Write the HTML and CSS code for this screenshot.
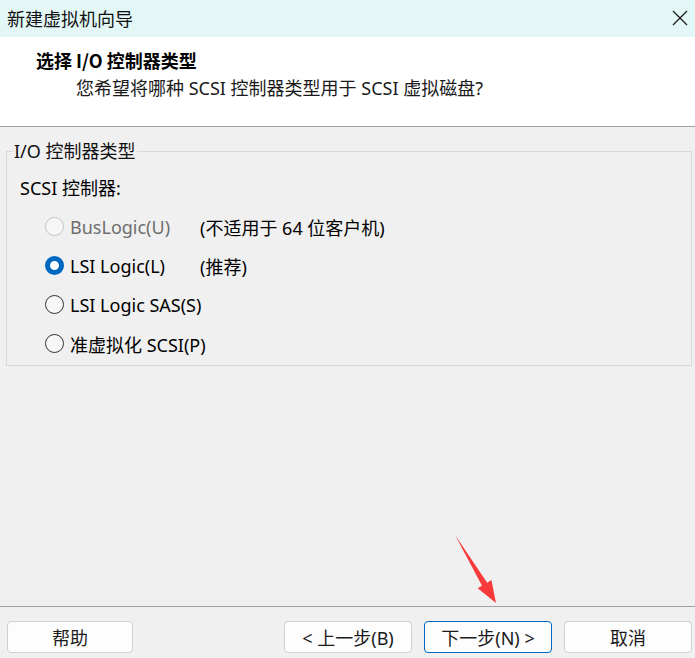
FILE: index.html
```html
<!DOCTYPE html>
<html lang="zh-CN">
<head>
<meta charset="utf-8">
<title>新建虚拟机向导</title>
<link rel="stylesheet" href="styles.css">
</head>
<body>
<div class="window">
  <div class="titlebar">
    <span class="title">新建虚拟机向导</span>
    <svg class="close" width="16" height="16" viewBox="0 0 16 16"><path d="M1 1 L15 15 M15 1 L1 15" stroke="#1a1a1a" stroke-width="1.3" fill="none"/></svg>
  </div>
  <div class="header">
    <div class="h-title">选择 I/O 控制器类型</div>
    <div class="h-sub">您希望将哪种 SCSI 控制器类型用于 SCSI 虚拟磁盘?</div>
  </div>
  <div class="content">
    <fieldset class="group">
      <legend class="legend">I/O 控制器类型</legend>
      <div class="ctl-label">SCSI 控制器:</div>
      <div class="row disabled">
        <span class="radio"></span><span class="opt">BusLogic(U)</span><span class="note">(不适用于 64 位客户机)</span>
      </div>
      <div class="row">
        <span class="radio checked"></span><span class="opt">LSI Logic(L)</span><span class="note">(推荐)</span>
      </div>
      <div class="row">
        <span class="radio"></span><span class="opt">LSI Logic SAS(S)</span>
      </div>
      <div class="row">
        <span class="radio"></span><span class="opt">准虚拟化 SCSI(P)</span>
      </div>
    </fieldset>
  </div>
  <div class="footer">
    <button class="btn help">帮助</button>
    <div class="spacer"></div>
    <button class="btn">&lt; 上一步(B)</button>
    <button class="btn primary">下一步(N) &gt;</button>
    <button class="btn">取消</button>
  </div>
  <svg class="arrow" width="695" height="658" viewBox="0 0 695 658">
    <polygon points="455,535 487.2,582.7 491.4,580.1 496,603 477.7,588.3 482,585.8" fill="#f83a3a"/>
  </svg>
</div>
</body>
</html>
```

FILE: styles.css
```css
* { box-sizing: border-box; }
html, body { margin: 0; padding: 0; }
body {
  width: 695px;
  height: 658px;
  overflow: hidden;
  background: #f0f0f0;
  font-family: "Noto Sans", "Noto Sans CJK SC", sans-serif;
  font-size: 18px;
  color: #000;
}
.window {
  position: relative;
  width: 695px;
  height: 658px;
  display: flex;
  flex-direction: column;
}
.titlebar {
  height: 37px;
  background: #e3f7f6;
  display: flex;
  align-items: center;
  justify-content: space-between;
  padding: 0 7px 2px 7px;
  font-family: "Noto Sans CJK SC", sans-serif;
  font-size: 18px;
  color: #111;
}
.close { margin-top: 1px; }
.header {
  height: 90px;
  background: #fff;
  border-bottom: 1px solid #a0a0a0;
  padding-top: 12px;
}
.h-title {
  margin-left: 36px;
  font-family: "Noto Sans CJK SC", sans-serif;
  font-weight: bold;
  font-size: 18px;
  line-height: 22px;
}
.h-sub {
  margin-left: 76px;
  margin-top: 6px;
  line-height: 22px;
  color: #1a1a1a;
}
.content {
  flex: 1;
  padding: 14px 3px 0 6px;
}
.group {
  margin: 0;
  height: 225px;
  border: 1px solid #d9d9d9;
  padding: 0 0 0 6px;
}
.legend {
  padding: 0 1px;
  line-height: 20px;
  color: #111;
}
.ctl-label {
  margin-left: 7px;
  margin-top: 15px;
  height: 24px;
  line-height: 24px;
}
.ctl-label + .row { margin-top: 7px; }
.row {
  height: 39px;
  display: flex;
  align-items: center;
  padding-left: 32px;
}
.radio {
  width: 19px;
  height: 19px;
  border-radius: 50%;
  border: 1px solid #333;
  background: #f7f7f7;
  flex: none;
}
.radio.checked {
  background: #fff;
  border: 5px solid #0067c0;
}
.disabled .radio {
  border-color: #c4c4c4;
  background: #f6f6f6;
}
.disabled .opt { color: #6e6e6e; }
.opt {
  margin-left: 6px;
  width: 130px;
  white-space: nowrap;
}
.note { white-space: nowrap; }
.footer {
  height: 52px;
  border-top: 1px solid #a0a0a0;
  display: flex;
  align-items: flex-start;
  padding: 14px 3px 0 7px;
  gap: 12px;
}
.spacer { flex: 1; }
.btn {
  width: 128px;
  height: 32px;
  border: 1px solid #d0d0d0;
  border-radius: 4px;
  background: #fdfdfd;
  font-family: "Noto Sans", "Noto Sans CJK SC", sans-serif;
  font-size: 18px;
  color: #1a1a1a;
  padding: 0;
  margin: 0;
}
.btn.help { width: 126px; }
.btn.primary { border-color: #0067c0; }
.arrow {
  position: absolute;
  left: 0;
  top: 0;
  pointer-events: none;
}
```
